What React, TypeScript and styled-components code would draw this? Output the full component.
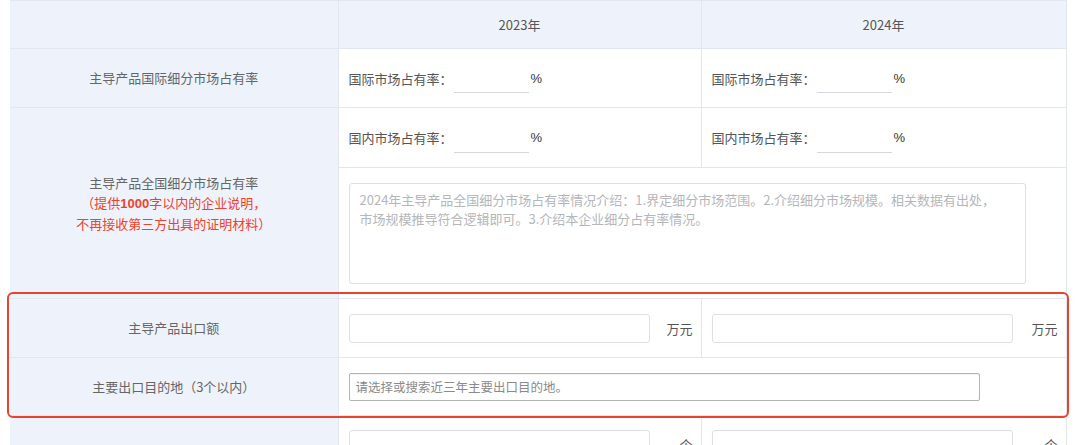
import React from 'react';
import styled, { createGlobalStyle } from 'styled-components';

const GlobalStyle = createGlobalStyle`
  body {
    margin: 0;
    background: #fff;
    font-family: "Noto Sans CJK SC", "Liberation Sans", sans-serif;
  }
`;

const years = ['2023年', '2024年'];

const App = function App() {
  return (
    <Page>
      <GlobalStyle />
      <Wrap>
        <Table>
          <colgroup>
            <col style={{ width: 328 }} />
            <col style={{ width: 363 }} />
            <col style={{ width: 365 }} />
          </colgroup>
          <tbody>
            <Row h={48}>
              <LabelCell />
              {years.map((y) => (
                <HeadCell key={y}>{y}</HeadCell>
              ))}
            </Row>
            <Row h={59}>
              <LabelCell>主导产品国际细分市场占有率</LabelCell>
              {years.map((y) => (
                <Cell key={y}>
                  <ShareLine>
                    <span>国际市场占有率：</span>
                    <LineInput />
                    <Percent>%</Percent>
                  </ShareLine>
                </Cell>
              ))}
            </Row>
            <Row h={60}>
              <LabelCell rowSpan={2}>
                主导产品全国细分市场占有率
                <Warn>
                  （提供<b>1000</b>字以内的企业说明，
                  <br />
                  不再接收第三方出具的证明材料）
                </Warn>
              </LabelCell>
              {years.map((y) => (
                <Cell key={y}>
                  <ShareLine>
                    <span>国内市场占有率：</span>
                    <LineInput />
                    <Percent>%</Percent>
                  </ShareLine>
                </Cell>
              ))}
            </Row>
            <Row h={131}>
              <Cell colSpan={2}>
                <Area
                  placeholder={
                    '2024年主导产品全国细分市场占有率情况介绍：1.界定细分市场范围。2.介绍细分市场规模。相关数据有出处，\n市场规模推导符合逻辑即可。3.介绍本企业细分占有率情况。'
                  }
                />
              </Cell>
            </Row>
            <Row h={59}>
              <LabelCell>主导产品出口额</LabelCell>
              {years.map((y) => (
                <Cell key={y}>
                  <UnitLine>
                    <BoxInput />
                    <Unit>万元</Unit>
                  </UnitLine>
                </Cell>
              ))}
            </Row>
            <Row h={58}>
              <LabelCell>主要出口目的地（3个以内）</LabelCell>
              <Cell colSpan={2}>
                <SelectBox>请选择或搜索近三年主要出口目的地。</SelectBox>
              </Cell>
            </Row>
            <Row h={59}>
              <LabelCell />
              {years.map((y) => (
                <Cell key={y} top>
                  <UnitLine>
                    <BoxInput />
                    <Unit>个</Unit>
                  </UnitLine>
                </Cell>
              ))}
            </Row>
          </tbody>
        </Table>
        <Highlight />
      </Wrap>
    </Page>
  );
};

const Page = styled.div`
  width: 1080px;
  height: 445px;
  overflow: hidden;
`;

const Wrap = styled.div`
  position: relative;
  padding-left: 10px;
`;

const Table = styled.table`
  width: 1056px;
  table-layout: fixed;
  border-collapse: collapse;
  font-size: 13px;
  color: #555;
`;

const Row = styled.tr<{ h: number }>`
  height: ${(p) => p.h}px;
`;

const LabelCell = styled.td`
  background: #eef3fb;
  border: 1px solid #e2e7ef;
  border-left: none;
  text-align: center;
  vertical-align: middle;
  color: #666;
  line-height: 20px;
  padding: 0;
`;

const HeadCell = styled.td`
  background: #eef3fb;
  border: 1px solid #e2e7ef;
  text-align: center;
  color: #555;
  padding: 0;
`;

const Cell = styled.td<{ top?: boolean }>`
  border: 1px solid #e2e7ef;
  padding: ${(p) => (p.top ? '14px 8px 0 10px' : '0 8px 0 10px')};
  vertical-align: ${(p) => (p.top ? 'top' : 'middle')};
`;

const Warn = styled.div`
  color: #f0412d;
  b {
    font-weight: 600;
    font-family: "Liberation Sans", sans-serif;
  }
`;

const ShareLine = styled.div`
  display: flex;
  align-items: center;
  color: #555;
`;

const LineInput = styled.input`
  width: 75px;
  height: 28px;
  box-sizing: border-box;
  border: none;
  border-bottom: 1px solid #d4d7dc;
  margin: 2px 2px 0 1px;
  outline: none;
  background: transparent;
`;

const Percent = styled.span`
  font-family: "Liberation Sans", sans-serif;
  font-size: 13px;
  color: #333;
`;

const Area = styled.textarea`
  display: block;
  width: 677px;
  height: 101px;
  box-sizing: border-box;
  border: 1px solid #dcdfe6;
  border-radius: 3px;
  padding: 6px 10px;
  resize: none;
  font-family: "Noto Sans CJK SC", "Liberation Sans", sans-serif;
  font-size: 13px;
  line-height: 19px;
  outline: none;
  &::placeholder {
    color: #b4b6ba;
  }
`;

const UnitLine = styled.div`
  display: flex;
  align-items: center;
  justify-content: space-between;
`;

const BoxInput = styled.input`
  width: 301px;
  height: 29px;
  box-sizing: border-box;
  border: 1px solid #dcdfe6;
  border-radius: 3px;
  outline: none;
`;

const Unit = styled.span`
  color: #555;
  padding-right: 0;
`;

const SelectBox = styled.div`
  width: 631px;
  height: 28px;
  box-sizing: border-box;
  border: 1px solid #b4b4b4;
  border-radius: 2px;
  padding: 0 6px;
  font-size: 12.5px;
  line-height: 26px;
  color: #8a8a8a;
  box-shadow: inset 0 1px 1px rgba(0, 0, 0, 0.06);
`;

const Highlight = styled.div`
  position: absolute;
  left: 7px;
  top: 292px;
  width: 1062px;
  height: 126px;
  box-sizing: border-box;
  border: 2px solid #e8432e;
  border-radius: 6px;
  pointer-events: none;
`;

export default App;
